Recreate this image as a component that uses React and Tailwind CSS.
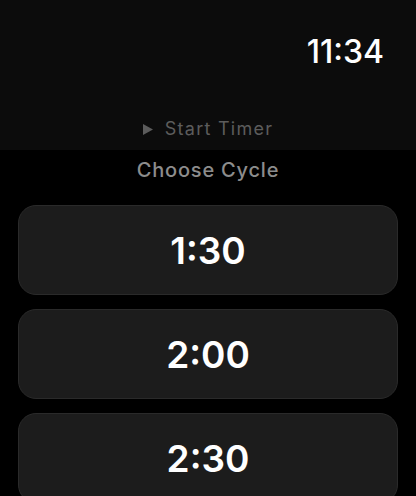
import React from "react";

const cycles = ["1:30", "2:00", "2:30"];

function Header() {
  return (
    <div className="h-[150px] bg-[#0c0c0c] flex flex-col">
      <div className="flex justify-end pt-[36px] pr-[32px]">
        <span className="text-[32px] leading-none font-medium text-white">11:34</span>
      </div>
      <div className="mt-auto pb-[12px] flex items-center justify-center gap-[12px]">
        <svg width="10" height="11" viewBox="0 0 10 11" className="mt-[1px]">
          <path d="M0 0 L10 5.5 L0 11 Z" fill="#5c5c5c" />
        </svg>
        <span className="text-[18px] leading-none text-[#5c5c5c] tracking-[0.07em]">Start Timer</span>
      </div>
    </div>
  );
}

function App() {
  return (
    <div className="w-[416px] h-[496px] overflow-hidden bg-black" style={{ fontFamily: "Inter, 'Noto Sans', sans-serif" }}>
      <Header />
      <div className="h-[55px] flex items-start justify-center pt-[10px]">
        <span className="text-[20px] leading-none font-medium text-[#8c8c8c] tracking-[0.04em]">Choose Cycle</span>
      </div>
      <div className="flex flex-col gap-[14px] px-[18px]">
        {cycles.map(c => (
          <button
            key={c}
            className="h-[90px] shrink-0 rounded-[18px] bg-[#1c1c1c] border border-[#2a2a2a] flex items-center justify-center"
          >
            <span className="text-[37px] leading-none font-semibold text-white">{c}</span>
          </button>
        ))}
      </div>
    </div>
  );
}

export default App;
